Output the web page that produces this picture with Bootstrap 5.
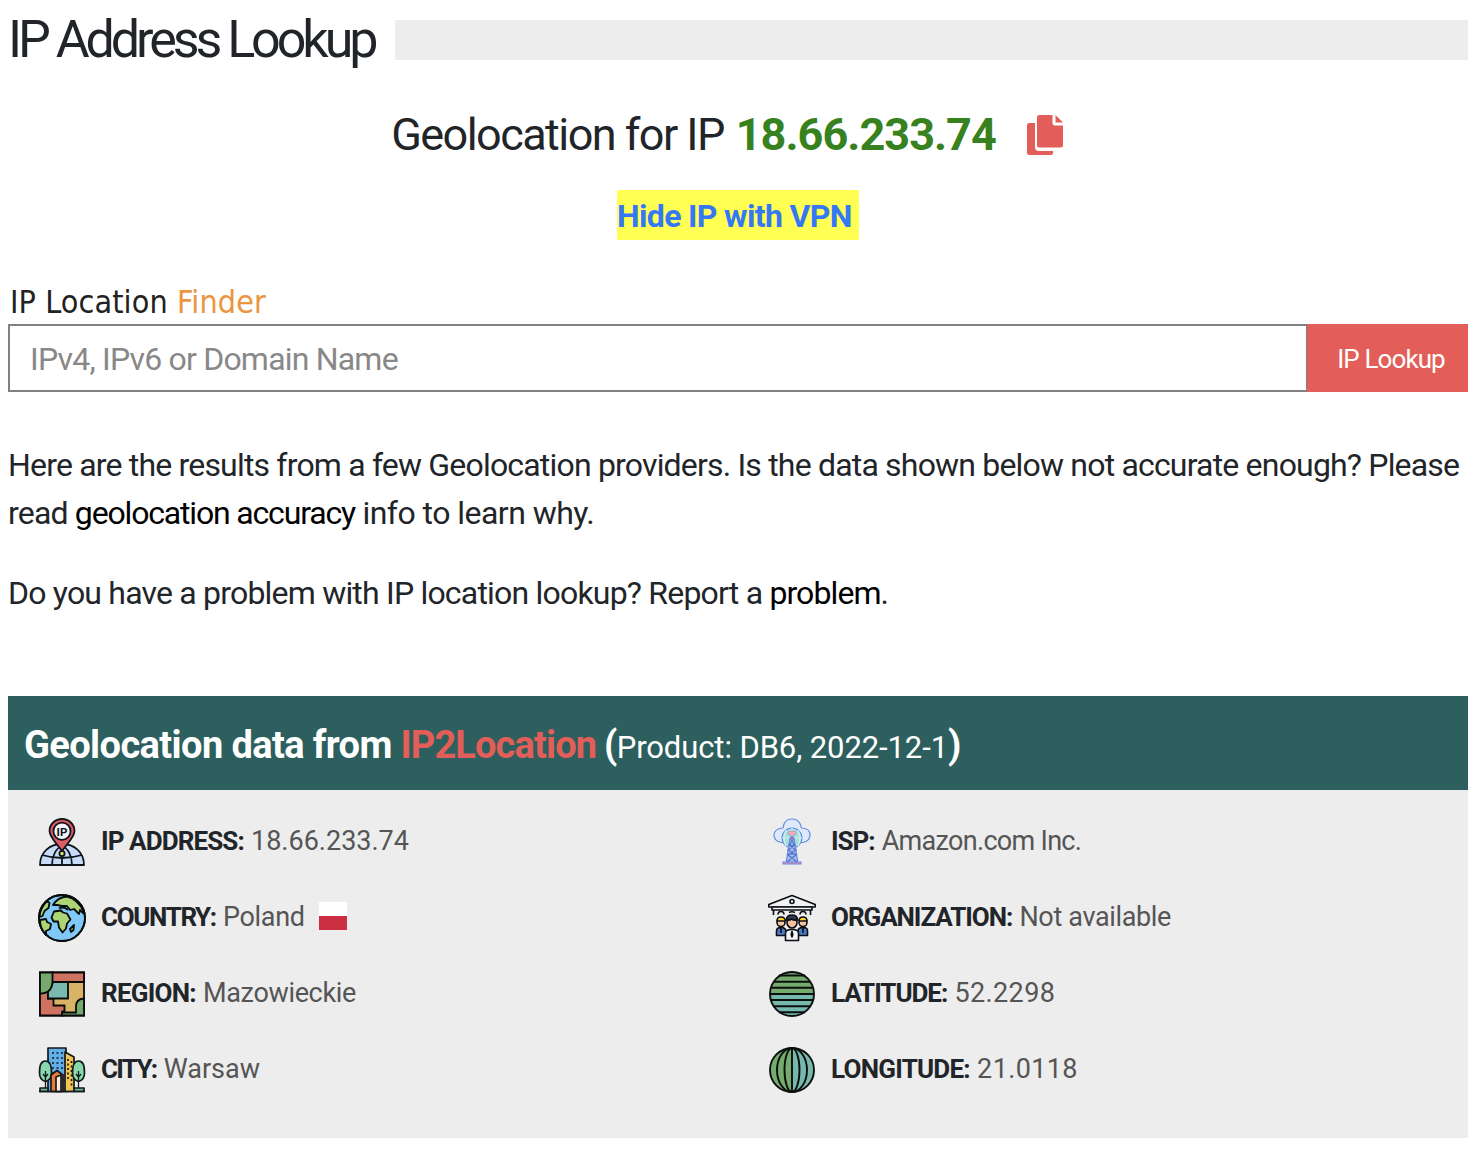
<!DOCTYPE html>
<html lang="en">
<head>
<meta charset="utf-8">
<meta name="viewport" content="width=device-width, initial-scale=1">
<title>IP Address Lookup</title>
<link href="https://cdn.jsdelivr.net/npm/bootstrap@5.3.0/dist/css/bootstrap.min.css" rel="stylesheet">
<style>
  body { font-family: Roboto, "Noto Sans", sans-serif; font-size: 32px; line-height: 48px; color: #212529; }
  .page { padding: 0 6px 0 8px; }
  .page-title { height: 80px; gap: 20px; }
  .page-title h1 { width: 367px; font-size: 52px; font-weight: 400; line-height: 80px; letter-spacing: -4.05px; }
  .title-bar { height: 40px; background: #ededed; }
  .geo-line { height: 60px; margin-top: 25px; font-size: 45px; line-height: 60px; padding-right: 22px; }
  .geo-label { letter-spacing: -1.55px; margin-right: 12px; }
  .geo-line strong { color: #37811f; letter-spacing: -.95px; margin-right: 31px; }
  .vpn-row { margin-top: 25px; height: 50px; }
  .vpn-link { background: #ffff54; color: #3478f6; font-weight: 700; line-height: 52px; height: 50px; width: 242px; letter-spacing: -.65px; }
  .finder { font-family: "DejaVu Sans Condensed", "DejaVu Sans", sans-serif; font-stretch: condensed; font-size: 32px; line-height: 34px; letter-spacing: .1px; margin-top: 45px; height: 39px; padding-left: 2px; color: #222; }
  .finder span { color: #ec953f; }
  .lookup { height: 68px; }
  .lookup .form-control { border: 2px solid #808080; border-radius: 0; font-size: 32px; padding: 2px 20px 0; color: #555; letter-spacing: -.8px; }
  .lookup .form-control::placeholder { color: #888; opacity: 1; }
  .lookup .btn { width: 161px; background: #e35e58; color: #fff; border: 0; border-radius: 0; font-size: 26px; padding: 2px 0 0 7px; letter-spacing: -.9px; }
  .intro { margin-top: 49px; letter-spacing: -.815px; }
  .intro p { margin-bottom: 32px; white-space: nowrap; }
  .intro a { color: #000; letter-spacing: -1.17px; }
  .intro .tail { letter-spacing: -.53px; }
  .intro .report { letter-spacing: -.8px; }
  .intro .report a { letter-spacing: -.9px; }
  .geo-card { margin-top: 79px; height: 442px; border: 0; border-radius: 0; background: #ededed; }
  .geo-card .card-header { height: 94px; border: 0; border-radius: 0; background: #2c5f5d; color: #fff; font-size: 38px; font-weight: 700; padding: 6px 16px 0; white-space: nowrap; letter-spacing: -.6px; }
  .geo-card .card-header a { color: #e35e58; letter-spacing: -.87px; margin-right: -1px; }
  .geo-card .card-header small { font-size: 31px; font-weight: 400; letter-spacing: -.1px; }
  .geo-card .card-body { padding: 14px 0 0; color: #555; font-size: 27px; }
  .fact { height: 76px; padding-left: 30px; gap: 15px; white-space: nowrap; }
  .fact > svg { width: 48px; height: 48px; flex: none; }
  .fact > .pair { margin-bottom: 2px; }
  .fact b { color: #212529; font-size: 26px; letter-spacing: -1.05px; margin-right: .5px; }
  .fact .ls-addr { letter-spacing: -.9px; }
  .fact .ls-country { letter-spacing: -1.35px; }
  .fact .ls-city { letter-spacing: -1.7px; }
  .fact .ls-wide { letter-spacing: -.77px; }
  .val-tight { letter-spacing: -.35px; }
  .val-isp { letter-spacing: -.7px; }
  .val-coord { letter-spacing: .38px; }
  .flag { width: 28px; height: 28px; background: linear-gradient(#fff 50%, #cb2f41 50%); margin: 0 0 4px -1px; }
</style>
</head>
<body>
<main class="page">
  <header class="page-title d-flex align-items-center">
    <h1 class="m-0 text-nowrap flex-shrink-0">IP Address Lookup</h1>
    <div class="title-bar flex-grow-1"></div>
  </header>

  <div class="geo-line d-flex justify-content-center align-items-center text-nowrap">
    <span class="geo-label">Geolocation for IP</span><strong>18.66.233.74</strong>
    <svg width="36" height="40" viewBox="0 0 36 40" fill="#e35e58"><path d="M2.500 8H8v24q0 4 4 4h14v2q0 2-2 2H2.500q-2.500 0-2.500-2.500V10.500Q0 8 2.500 8z"/><path d="M12.500 0H25.500v8q0 2.500 2.500 2.500h8V30.500q0 2-2 2H12.500q-2.500 0-2.500-2.500V2.500Q10 0 12.500 0zM28.500 0l7.500 7.500h-7.500z"/></svg>
  </div>

  <div class="vpn-row d-flex justify-content-center">
    <a class="vpn-link text-decoration-none text-nowrap" href="#">Hide IP with VPN</a>
  </div>

  <div class="finder">IP Location <span>Finder</span></div>
  <form class="lookup input-group flex-nowrap">
    <input class="form-control" type="text" placeholder="IPv4, IPv6 or Domain Name" aria-label="IP or domain">
    <button class="btn" type="button">IP Lookup</button>
  </form>

  <section class="intro">
    <p>Here are the results from a few Geolocation providers. Is the data shown below not accurate enough? Please<br>read <a class="text-decoration-none" href="#">geolocation accuracy</a><span class="tail"> info to learn why.</span></p>
    <p class="report mb-0">Do you have a problem with IP location lookup? Report a <a class="text-decoration-none" href="#">problem</a>.</p>
  </section>

  <section class="geo-card card">
    <div class="card-header d-flex align-items-center"><div>Geolocation data from <a class="text-decoration-none" href="#">IP2Location</a> (<small>Product: DB6, 2022-12-1</small>)</div></div>
    <div class="card-body">
      <div class="row g-0">
        <div class="col-6">
          <div class="fact d-flex align-items-center">
            <svg viewBox="0 0 48 48" stroke="#10151b" stroke-width="1.800" stroke-linejoin="round"><path d="M2 47C2 34 12 26 24 26s22 8 22 21z" fill="#c8dcfa"/><path d="M14 47c0-9 4-17 10-19 6 2 10 10 10 19M24 33v14M4 37q20 6 40 0" fill="none"/><circle cx="24" cy="35.500" r="2.600" fill="#dcec5c"/><path d="M24 33C19 26 11.500 19 11.500 13a12.500 12 0 0 1 25 0C36.500 19 29 26 24 33z" fill="#e35b65"/><circle cx="24" cy="13.300" r="8.600" fill="#f3f3f8"/><text x="24" y="17.500" text-anchor="middle" font-family="Roboto,sans-serif" font-size="11.500" font-weight="700" fill="#10151b" stroke="none">IP</text></svg>
            <div class="pair"><b class="ls-addr">IP ADDRESS:</b> <span>18.66.233.74</span></div>
          </div>
          <div class="fact d-flex align-items-center">
            <svg viewBox="0 0 48 48" stroke="#080b0d" stroke-width="1.800" stroke-linejoin="round"><circle cx="24" cy="24" r="23" fill="#80c8f6"/><g fill="#add576"><path d="M15 11Q20 3 29 2.500 40 5 46 18l-1 1-3-3-1 4-5-5-4 1-3-4-5 0-5-1z"/><path d="M9 7l2.500 2-1 5-4 3-2 5-3 1Q2 14 9 7zM2 26l6-1 1 3 4 2-1 5-4 2v4Q2 35 2 26z"/><path d="M16 17.500l7-1 2 2 4 1 3.500 6-3.500 4-1 5-3.500 4-3.500-5-1-6-4.500 0-2-4z"/><path d="M36 31l-.500 5-2.500 2-1-3z"/></g><path d="M21 14.500q5-2.500 9 1.500" fill="none"/><circle cx="24" cy="24" r="23" fill="none"/></svg>
            <div class="pair"><b class="ls-country">COUNTRY:</b> <span class="val-tight">Poland</span></div><div class="flag"></div>
          </div>
          <div class="fact d-flex align-items-center">
            <svg viewBox="0 0 48 48" stroke="#080b0a" stroke-width="1.800"><path d="M2 2.500h44v43H2z" fill="#d9b466"/><path d="M14 2.500h32v9.500H14zM2 23.500q4 0 8-2V28.500h5.500v7h11v6h-2v4H2z" fill="#cd7360"/><path d="M15 12h15v16.500H10V21q4-4 5-9z" fill="#79b9b0"/><path d="M2 2.500h12.500v8q0 13-12.500 13z" fill="#75a96e"/><path d="M46 28.500q-8 .500-8 8V42.500H24v3h22z" fill="#75a96e"/></svg>
            <div class="pair"><b class="ls-wide">REGION:</b> <span class="val-tight">Mazowieckie</span></div>
          </div>
          <div class="fact d-flex align-items-center">
            <svg viewBox="0 0 48 48" stroke="#14191c" stroke-width="1.700" stroke-linejoin="round"><path d="M10 2h18v43.500H10z" fill="#61aee8"/><path d="M14 7h11M14 12h11M14 17h11M14 22h11M14 27h6" fill="none" stroke-dasharray="2 2.500"/><path d="M27 6l9 5v34.500H27z" fill="#f3c653"/><path d="M30 13v20M33.500 15v27" fill="none" stroke-dasharray="2 2.500"/><path d="M7.500 15C2 15 1.500 21 1.500 27q0 7 6 8.500 6-1.500 6-8.500c0-6-1-12-6-12zM40.500 15c-5 0-6 6-6 12q0 7 6 8.500 6-1.500 6-8.500c0-6-.500-12-6-12z" fill="#87d9ac"/><path d="M7.500 25v20M5 28l2.500 3 2.500-3M40.500 25v20M38 28l2.500 3 2.500-3" fill="none" stroke-width="1.300"/><path d="M13 45.500V29l6-4.500 6 4.500v16.500z" fill="#ed7939"/><path d="M18 31l5-2v16.500h-5z" fill="#f8eddf"/><path d="M2 42h8v3.500H2zM36 42h10v3.500H36z" fill="#67b98b"/><path d="M1 45.500h46" fill="none"/></svg>
            <div class="pair"><b class="ls-city">CITY:</b> <span>Warsaw</span></div>
          </div>
        </div>
        <div class="col-6">
          <div class="fact d-flex align-items-center">
            <svg viewBox="0 0 48 48" stroke="#6b8cdf" stroke-width="1.200" stroke-linejoin="round"><path d="M13 24.500Q6 23 6 17t9-7q1-9 9-9t9.500 9Q42 10 42 17q0 6-7 7.500z" fill="#dceafb"/><circle cx="24" cy="20" r="10" fill="#a0e4da"/><path d="M14 20h20M24 10v20M18 12q-4 8 0 16M30 12q4 8 0 16" stroke="#d6edf2" fill="none"/><ellipse cx="24" cy="15" rx="4" ry="2" fill="#efb1b5" stroke="#c799c2"/><path d="M22 20h4l4 25H18z" fill="#a5bcef"/><path d="M22 20l5 7-7 5 8 5-9 7m7-24l-5 7 7 5-8 5 9 7M20.500 27h7M19.500 36h9" fill="none" stroke="#4f6fc8"/><circle cx="24" cy="20" r="1.500" fill="#d65e87"/><path d="M15 44h18v2H15z" fill="#d694b7"/></svg>
            <div class="pair"><b>ISP:</b> <span class="val-isp">Amazon.com Inc.</span></div>
          </div>
          <div class="fact d-flex align-items-center">
            <svg viewBox="0 0 48 48" stroke="#0c0e12" stroke-width="1.600" stroke-linejoin="round"><path d="M.800 10.500L24 1.500l23.200 9V13H.800z" fill="#f1f2f5"/><path d="M4 13h40v3H4z" fill="#f1f2f5"/><path d="M5.500 16v5M42.500 16v5M10 20.500q0-3 3-3t3 3M21 18.500q3-1.500 6 0M32 20.500q0-3 3-3t3 3" fill="none"/><circle cx="24" cy="7.500" r="2" fill="#f1f2f5"/><path d="M8.500 41.500V37q0-3.500 4.500-3.500t5 3.500v4.500zM30 41.500V37q0-3.500 5-3.500t4.500 3.500v4.500z" fill="#4d7bc3"/><g fill="#f5c6a3"><circle cx="13" cy="28.500" r="4"/><circle cx="35" cy="28.500" r="4"/></g><path d="M9 27q0-4 4-4t4.500 4zM31 27q0-4 4-4t4 4z" fill="#ffd72f"/><path d="M13 34v5M35 34v5" fill="none"/><path d="M17.500 46.500V39q0-3.500 6.500-3.500t6.500 3.500v7.500z" fill="#f4f5f8"/><ellipse cx="24" cy="28.500" rx="5" ry="5.500" fill="#f6bf9f"/><path d="M18.500 26q0-5 5.500-5t5.500 5q-4 .500-6-1-2 1.500-5 1z" fill="#303a59"/><path d="M24 37.500l-.800 3 .800 2.500.800-2.500z" fill="#26304c"/></svg>
            <div class="pair"><b>ORGANIZATION:</b> <span class="val-tight">Not available</span></div>
          </div>
          <div class="fact d-flex align-items-center">
            <svg viewBox="0 0 48 48" stroke="#0b0f0d" stroke-width="1.900"><path d="M2 24a22 22 0 0 1 44 0z" fill="#75ab6c" stroke="none"/><path d="M2 24a22 22 0 0 0 44 0z" fill="#77b8ae" stroke="none"/><path d="M11 5.500h26M6 11.700h36M3 17.800h42M2 24h44M3 30h42M6 36.200h36M11 42.300h26" fill="none"/><circle cx="24" cy="24" r="22" fill="none"/></svg>
            <div class="pair"><b>LATITUDE:</b> <span class="val-coord">52.2298</span></div>
          </div>
          <div class="fact d-flex align-items-center">
            <svg viewBox="0 0 48 48" stroke="#0b0f0d" stroke-width="1.900"><path d="M24 2a22 22 0 0 0 0 44z" fill="#75ab6c" stroke="none"/><path d="M24 2a22 22 0 0 1 0 44z" fill="#77b8ae" stroke="none"/><path d="M24 2v44" fill="none"/><ellipse cx="24" cy="24" rx="7.500" ry="22" fill="none"/><ellipse cx="24" cy="24" rx="15" ry="22" fill="none"/><circle cx="24" cy="24" r="22" fill="none"/></svg>
            <div class="pair"><b class="ls-wide">LONGITUDE:</b> <span class="val-coord">21.0118</span></div>
          </div>
        </div>
      </div>
    </div>
  </section>
</main>
<script src="https://cdn.jsdelivr.net/npm/bootstrap@5.3.0/dist/js/bootstrap.bundle.min.js"></script>
</body>
</html>
